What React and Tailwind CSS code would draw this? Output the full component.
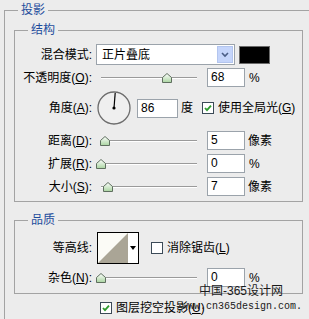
import React from "react";

const FONT = "font-['Liberation_Sans','Noto_Sans_CJK_SC',sans-serif]";

function Thumb() {
  return (
    <svg width="10" height="10" viewBox="0 0 10 10" className="block">
      <defs>
        <linearGradient id="tg" x1="0" y1="0" x2="0" y2="1">
          <stop offset="0" stopColor="#ffffff" />
          <stop offset="1" stopColor="#a9d4a0" />
        </linearGradient>
      </defs>
      <path d="M5 0.5 L9.5 4.5 L9.5 9.5 L0.5 9.5 L0.5 4.5 Z" fill="url(#tg)" stroke="#5f6f5f" strokeWidth="1" />
    </svg>
  );
}

function Slider({ thumbLeft }) {
  return (
    <div className="relative w-[101px] h-[12px] shrink-0">
      <div className="absolute left-[5px] right-0 top-[5px] h-px bg-[#9a9a9a]" />
      <div className="absolute left-[5px] right-0 top-[6px] h-px bg-[#ffffff]" />
      <div className="absolute top-[1px]" style={{ left: thumbLeft - 96 }}>
        <Thumb />
      </div>
    </div>
  );
}

function Input({ value, w = "w-[38px]" }) {
  return (
    <div className={`${w} h-[19px] shrink-0 bg-white border border-[#9ba3ab] pl-[3px] text-[12px] leading-[17px] text-black`}>
      {value}
    </div>
  );
}

function Checkbox({ checked }) {
  return (
    <div className="w-[12px] h-[12px] shrink-0 border border-[#3b4a57] bg-white flex items-center justify-center">
      {checked && (
        <svg width="10" height="10" viewBox="0 0 10 10">
          <path d="M2 5 L4 7.2 L8 2.6" fill="none" stroke="#2e9b2e" strokeWidth="1.8" />
        </svg>
      )}
    </div>
  );
}

function Label({ children }) {
  return (
    <div className="w-[77px] shrink-0 text-right whitespace-nowrap text-[12px] leading-[14px] text-black">
      {children}
    </div>
  );
}

function GroupTitle({ children }) {
  return (
    <span className="absolute left-[13px] -top-[8px] px-[3px] bg-[#ececec] text-[12px] leading-[14px] text-[#1e4c9c]">
      {children}
    </span>
  );
}

export default function App() {
  return (
    <div className={`relative w-[309px] h-[319px] overflow-hidden bg-[#ececec] pl-[4px] pt-[10px] ${FONT}`}>
      <div className="relative w-[310px] h-[320px] border-l border-t border-[#a3a3a3] pl-[9px] pt-[19px]">
        <GroupTitle>投影</GroupTitle>

        {/* 结构 */}
        <div className="relative w-[289px] h-[172px] border border-[#a3a3a3] flex flex-col">
          <GroupTitle>结构</GroupTitle>

          <div className="mt-[13px] h-[21px] flex items-center">
            <Label>混合模式:</Label>
            <div className="ml-[4px] w-[139px] h-[21px] bg-white border border-[#9ba3ab] flex items-center justify-between pl-[5px] pr-px">
              <span className="text-[12px] leading-[14px] text-black">正片叠底</span>
              <div className="w-[16px] h-[17px] bg-[#c5d5fb] border border-[#b3c5ee] flex items-center justify-center">
                <svg width="8" height="6" viewBox="0 0 8 6">
                  <path d="M1 1 L4 4 L7 1" fill="none" stroke="#4a5d86" strokeWidth="1.6" />
                </svg>
              </div>
            </div>
            <div className="ml-[4px] w-[31px] h-[18px] bg-black border border-[#6a6a6a]" />
          </div>

          <div className="mt-[3px] h-[19px] flex items-center">
            <Label>不透明度(<u>O</u>):</Label>
            <div className="ml-[4px]"><Slider thumbLeft={162} /></div>
            <div className="ml-[10px]"><Input value="68" /></div>
            <span className="ml-[4px] text-[12px] leading-[14px] text-black">%</span>
          </div>

          <div className="mt-[4px] h-[34px] flex items-center">
            <Label>角度(<u>A</u>):</Label>
            <div className="ml-[5px] w-[34px] h-[34px] shrink-0">
              <svg width="34" height="34" viewBox="0 0 34 34">
                <circle cx="17" cy="17" r="16" fill="#efefef" stroke="#6c6c6c" strokeWidth="1.3" />
                <line x1="17" y1="17" x2="18.2" y2="2" stroke="#000" strokeWidth="1.2" />
                <circle cx="17" cy="17" r="1.6" fill="#000" />
              </svg>
            </div>
            <div className="ml-[6px]"><Input value="86" w="w-[41px]" /></div>
            <span className="ml-[3px] text-[12px] leading-[14px] text-black">度</span>
            <div className="ml-[9px]"><Checkbox checked /></div>
            <span className="ml-[4px] text-[12px] leading-[14px] text-black whitespace-nowrap">使用全局光(<u>G</u>)</span>
          </div>

          <div className="mt-[6px] h-[19px] flex items-center">
            <Label>距离(<u>D</u>):</Label>
            <div className="ml-[4px]"><Slider thumbLeft={100} /></div>
            <div className="ml-[10px]"><Input value="5" /></div>
            <span className="ml-[3px] text-[12px] leading-[14px] text-black">像素</span>
          </div>

          <div className="mt-[4px] h-[19px] flex items-center">
            <Label>扩展(<u>R</u>):</Label>
            <div className="ml-[4px]"><Slider thumbLeft={96} /></div>
            <div className="ml-[10px]"><Input value="0" /></div>
            <span className="ml-[4px] text-[12px] leading-[14px] text-black">%</span>
          </div>

          <div className="mt-[4px] h-[19px] flex items-center">
            <Label>大小(<u>S</u>):</Label>
            <div className="ml-[4px]"><Slider thumbLeft={103} /></div>
            <div className="ml-[10px]"><Input value="7" /></div>
            <span className="ml-[3px] text-[12px] leading-[14px] text-black">像素</span>
          </div>
        </div>

        {/* 品质 */}
        <div className="relative mt-[18px] w-[289px] h-[74px] border border-[#a3a3a3] flex flex-col">
          <GroupTitle>品质</GroupTitle>

          <div className="mt-[11px] h-[32px] flex items-center">
            <Label>等高线:</Label>
            <div className="ml-[5px] w-[42px] h-[32px] border border-black bg-white flex shrink-0">
              <svg width="30" height="30" viewBox="0 0 30 30" className="block">
                <rect x="0" y="0" width="30" height="30" fill="#fbfbf6" />
                <path d="M0 30 L30 0 L30 30 Z" fill="#aaa596" />
              </svg>
              <div className="flex-1 flex items-center justify-center">
                <svg width="6" height="4" viewBox="0 0 6 4">
                  <path d="M0 0 L6 0 L3 4 Z" fill="#000" />
                </svg>
              </div>
            </div>
            <div className="ml-[12px]"><Checkbox checked={false} /></div>
            <span className="ml-[4px] text-[12px] leading-[14px] text-black whitespace-nowrap">消除锯齿(<u>L</u>)</span>
          </div>

          <div className="mt-[4px] h-[19px] flex items-center">
            <Label>杂色(<u>N</u>):</Label>
            <div className="ml-[4px]"><Slider thumbLeft={96} /></div>
            <div className="ml-[10px]"><Input value="0" /></div>
            <span className="ml-[4px] text-[12px] leading-[14px] text-black">%</span>
          </div>
        </div>

        <div className="mt-[8px] ml-[86px] h-[12px] flex items-center">
          <Checkbox checked />
          <span className="ml-[4px] text-[12px] leading-[14px] text-black whitespace-nowrap">图层挖空投影(<u>U</u>)</span>
        </div>
      </div>

      {/* watermark */}
      <span className="absolute left-[199px] top-[284px] text-[12px] leading-[14px] text-[#1a1a1a] whitespace-nowrap">
        中国-365设计网
      </span>
      <span className="absolute left-[182px] top-[301px] text-[10px] leading-[12px] text-[#1a1a1a] whitespace-nowrap font-['Liberation_Mono',monospace]">
        www.cn365design.com.
      </span>
    </div>
  );
}
